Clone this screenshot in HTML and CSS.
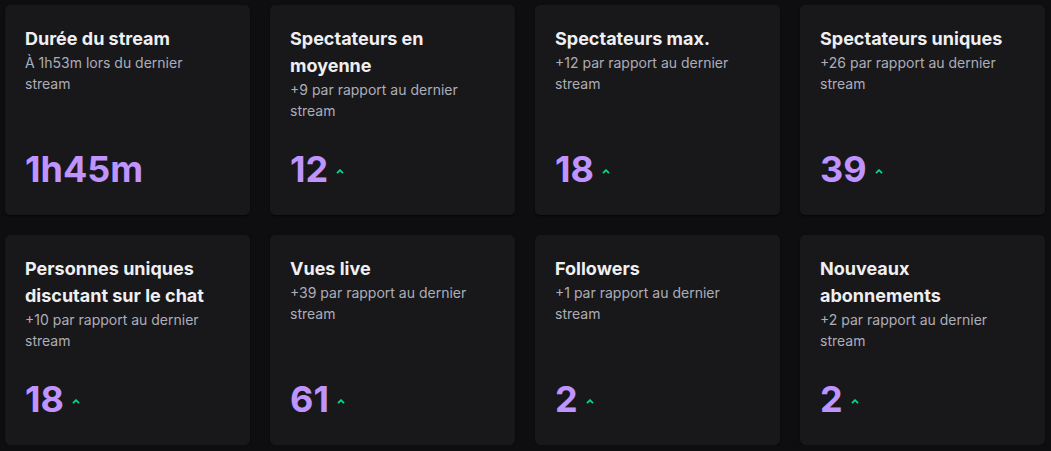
FILE: index.html
```html
<!DOCTYPE html>
<html lang="fr">
<head>
<meta charset="utf-8">
<link rel="stylesheet" href="styles.css">
</head>
<body>
<main class="grid">
  <section class="card">
    <h2 class="title">Durée du stream</h2>
    <p class="sub">À 1h53m lors du dernier stream</p>
    <div class="value"><span>1h45m</span></div>
  </section>
  <section class="card">
    <h2 class="title">Spectateurs en moyenne</h2>
    <p class="sub">+9 par rapport au dernier stream</p>
    <div class="value"><span>12</span><svg class="up" viewBox="0 0 8 5" width="8" height="5"><path d="M1 4.2 L4 1.2 L7 4.2" fill="none" stroke="#00db84" stroke-width="1.8"/></svg></div>
  </section>
  <section class="card">
    <h2 class="title">Spectateurs max.</h2>
    <p class="sub">+12 par rapport au dernier stream</p>
    <div class="value"><span>18</span><svg class="up" viewBox="0 0 8 5" width="8" height="5"><path d="M1 4.2 L4 1.2 L7 4.2" fill="none" stroke="#00db84" stroke-width="1.8"/></svg></div>
  </section>
  <section class="card">
    <h2 class="title">Spectateurs uniques</h2>
    <p class="sub">+26 par rapport au dernier stream</p>
    <div class="value"><span>39</span><svg class="up" viewBox="0 0 8 5" width="8" height="5"><path d="M1 4.2 L4 1.2 L7 4.2" fill="none" stroke="#00db84" stroke-width="1.8"/></svg></div>
  </section>
  <section class="card">
    <h2 class="title">Personnes uniques discutant sur le chat</h2>
    <p class="sub">+10 par rapport au dernier stream</p>
    <div class="value"><span>18</span><svg class="up" viewBox="0 0 8 5" width="8" height="5"><path d="M1 4.2 L4 1.2 L7 4.2" fill="none" stroke="#00db84" stroke-width="1.8"/></svg></div>
  </section>
  <section class="card">
    <h2 class="title">Vues live</h2>
    <p class="sub">+39 par rapport au dernier stream</p>
    <div class="value"><span>61</span><svg class="up" viewBox="0 0 8 5" width="8" height="5"><path d="M1 4.2 L4 1.2 L7 4.2" fill="none" stroke="#00db84" stroke-width="1.8"/></svg></div>
  </section>
  <section class="card">
    <h2 class="title">Followers</h2>
    <p class="sub">+1 par rapport au dernier stream</p>
    <div class="value"><span>2</span><svg class="up" viewBox="0 0 8 5" width="8" height="5"><path d="M1 4.2 L4 1.2 L7 4.2" fill="none" stroke="#00db84" stroke-width="1.8"/></svg></div>
  </section>
  <section class="card">
    <h2 class="title">Nouveaux abonnements</h2>
    <p class="sub">+2 par rapport au dernier stream</p>
    <div class="value"><span>2</span><svg class="up" viewBox="0 0 8 5" width="8" height="5"><path d="M1 4.2 L4 1.2 L7 4.2" fill="none" stroke="#00db84" stroke-width="1.8"/></svg></div>
  </section>
</main>
</body>
</html>
```

FILE: styles.css
```css
* { box-sizing: border-box; }
html, body {
  margin: 0;
  background: #0e0e10;
  font-family: Inter, "Noto Sans", sans-serif;
}
.grid {
  display: grid;
  grid-template-columns: repeat(4, 245px);
  grid-auto-rows: 210px;
  gap: 20px 20px;
  padding: 5px 0 0 5px;
}
.card {
  background: #18181b;
  border-radius: 5px;
  box-shadow: 0 1px 2px rgba(0,0,0,0.6);
  padding: 20px 20px 22px 20px;
  display: flex;
  flex-direction: column;
}
.title {
  margin: 0;
  font-size: 18px;
  line-height: 27px;
  font-weight: 700;
  color: #efeff1;
}
.sub {
  margin: 0;
  font-size: 14px;
  line-height: 21px;
  color: #adadb8;
}
.value {
  margin-top: auto;
  display: flex;
  align-items: center;
  gap: 8px;
  font-size: 36px;
  line-height: 48px;
  font-weight: 700;
  color: #bf94ff;
}
.up { display: block; margin-top: 4px; }
```
